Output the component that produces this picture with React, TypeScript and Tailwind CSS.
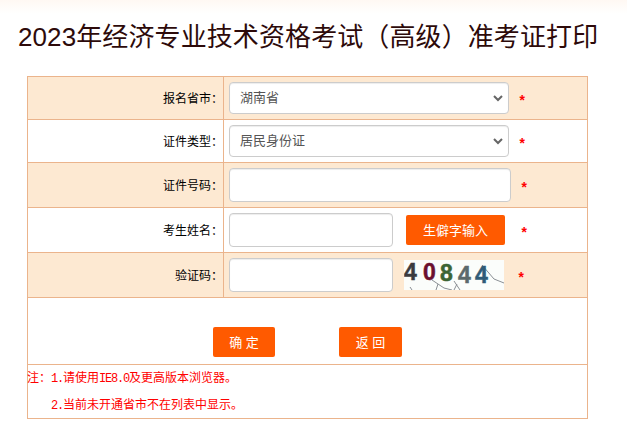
import React from "react"

const CJK = "font-['Liberation_Sans','Noto_Sans_CJK_SC',sans-serif]"

function Row({ label, tint, h, children }: { label: string; tint?: boolean; h: string; children: React.ReactNode }) {
  return (
    <div className={`flex border-b border-[#ebb48c] ${h} ${tint ? "bg-[#fde9d2]" : "bg-white"}`}>
      <div className="flex w-[196px] shrink-0 items-center justify-end border-r border-[#ebb48c] pt-[1px] text-[12px] text-black">
        {label}
      </div>
      <div className="flex min-w-0 flex-1 items-center pl-[5px]">{children}</div>
    </div>
  )
}

function Star({ className }: { className: string }) {
  return <span className={`font-['Liberation_Mono',monospace] text-[14px] font-bold leading-none text-[#ff0000] ${className}`}>*</span>
}

function FakeSelect({ value }: { value: string }) {
  return (
    <div className="flex h-[32px] w-[280px] items-center justify-between rounded-[4px] border border-[#cccccc] bg-white pl-[10px] pr-[4px] text-[13px] text-[#555555] shadow-[inset_0_1px_1px_rgba(0,0,0,0.075)]">
      <span>{value}</span>
      <svg viewBox="0 0 12 12" className="h-[12px] w-[12px]" fill="none" stroke="#666666" strokeWidth="2">
        <path d="M2 4l4 4 4-4" />
      </svg>
    </div>
  )
}

function Field({ w }: { w: string }) {
  return (
    <div className={`h-[34px] ${w} rounded-[4px] border border-[#cccccc] bg-white shadow-[inset_0_1px_1px_rgba(0,0,0,0.075)]`} />
  )
}

function Captcha() {
  return (
    <svg viewBox="0 0 100 30" className="h-[30px] w-[100px] bg-[#fbfdfb]">
      <path d="M78 5l12 14 10 4M28 20l12 8 8 2M34 24l-2 6M50 21l6 9M53 24l-3 6M6 27l2 3" fill="none" stroke="#8a8f94" strokeWidth="1" />
      <g fontFamily="'Liberation Sans',sans-serif" fontWeight="700" fontSize="23">
        <text x="0" y="20" fill="#3b3b3f" stroke="#3b3b3f" strokeWidth="0.5">4</text>
        <text x="19" y="20" fill="#6b1030" stroke="#6b1030" strokeWidth="0.5">0</text>
        <text x="36" y="21" fill="#3c6434" stroke="#3c6434" strokeWidth="0.5">8</text>
        <text x="54" y="23" fill="#5c6a6c" stroke="#5c6a6c" strokeWidth="0.5">4</text>
        <text x="71" y="23" fill="#2f5c78" stroke="#2f5c78" strokeWidth="0.5">4</text>
      </g>
    </svg>
  )
}

function Mono({ children }: { children: React.ReactNode }) {
  return <span className="font-['Liberation_Mono',monospace] tracking-[-1.2px]">{children}</span>
}

export default function App() {
  return (
    <div className={`h-[447px] w-[627px] overflow-hidden bg-gradient-to-b from-[#fff8f3] to-white to-[14px] ${CJK}`}>
      <h1 className="pl-[18px] pt-[18px] text-[26px] font-normal leading-[38px] tracking-[0.1px] text-[#2d0a0a]">
        2023年经济专业技术资格考试（高级）准考证打印
      </h1>

      <div className="ml-[27px] mt-[20px] w-[561px] border-x border-t border-[#ebb48c]">
        <Row label="报名省市：" tint h="h-[43px]">
          <FakeSelect value="湖南省" />
          <Star className="ml-[9px] mt-[8px]" />
        </Row>
        <Row label="证件类型：" h="h-[43px]">
          <FakeSelect value="居民身份证" />
          <Star className="ml-[9px] mt-[8px]" />
        </Row>
        <Row label="证件号码：" tint h="h-[45px]">
          <Field w="w-[282px]" />
          <Star className="ml-[9px] mt-[8px]" />
        </Row>
        <Row label="考生姓名：" h="h-[45px]">
          <Field w="w-[164px]" />
          <button className="ml-[13px] h-[30px] w-[99px] rounded-[2px] bg-[#ff5a00] pt-[1px] text-[13px] text-white">生僻字输入</button>
          <Star className="ml-[15px] mt-[8px]" />
        </Row>
        <Row label="验证码：" tint h="h-[45px]">
          <Field w="w-[164px]" />
          <div className="ml-[11px]"><Captcha /></div>
          <Star className="ml-[13px] mt-[8px]" />
        </Row>

        <div className="flex h-[67px] items-start border-b border-[#ebb48c] bg-white pl-[185px] pt-[29px]">
          <button className="h-[30px] w-[62px] rounded-[2px] bg-[#ff5a00] pt-[1px] text-[13px] text-white">确 定</button>
          <button className="ml-[64px] h-[30px] w-[63px] rounded-[2px] bg-[#ff5a00] pt-[1px] text-[13px] text-white">返 回</button>
        </div>

        <div className="h-[54px] border-b border-[#ebb48c] bg-white text-[12px] leading-[26px] text-[#ff0000]">
          <p className="-ml-[1px]">注：<Mono>1.</Mono>请使用<Mono>IE8.0</Mono>及更高版本浏览器。</p>
          <p className="pl-[23px]"><Mono>2.</Mono>当前未开通省市不在列表中显示。</p>
        </div>
      </div>
    </div>
  )
}
